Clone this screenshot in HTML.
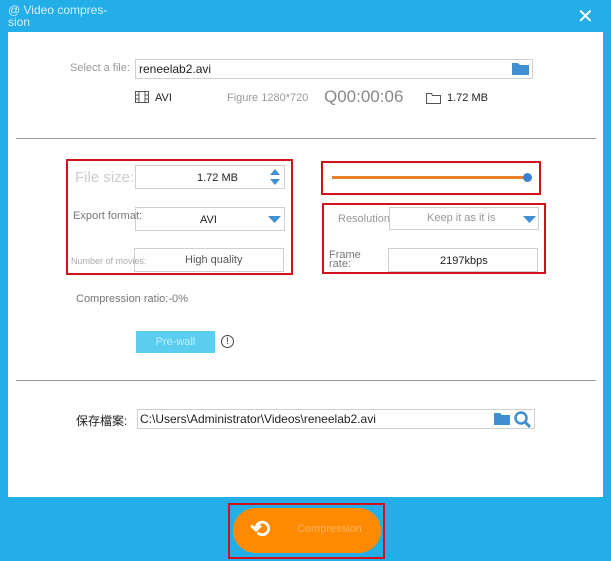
<!DOCTYPE html>
<html><head><meta charset="utf-8"><style>
*{margin:0;padding:0;box-sizing:border-box}
body{width:611px;height:561px;background:#24aee8;position:relative;overflow:hidden;font-family:"Liberation Sans","Noto Sans CJK SC",sans-serif;font-size:11px;color:#222}
.a{position:absolute;z-index:2}
.box{position:absolute;border:1px solid #cfcfcf;background:#fff;z-index:1}
.red{position:absolute;border:2px solid #d0121b;z-index:0}
.g{color:#999}
.hr{position:absolute;left:16px;width:580px;height:1px;background:#9a9a9a}
</style></head><body>
<div class="a" style="left:8px;top:4px;color:#d8efff;font-size:12px;line-height:12px">@ Video compres-<br>sion</div>
<div class="a" style="left:577px;top:4px;color:#fff;font-size:20px">✕</div>
<div class="a" style="left:8px;top:32px;width:595px;height:465px;background:#fff;z-index:0"></div>

<div class="a g" style="left:70px;top:62px">Select a file:</div>
<div class="box" style="left:135px;top:59px;width:398px;height:20px"></div>
<div class="a" style="left:139px;top:62px;font-size:12px">reneelab2.avi</div>
<svg class="a" style="left:511px;top:61px" width="19" height="15"><path d="M1 2h6l2 2h9v10H1z" fill="#3f8fd2"/></svg>
<svg class="a" style="left:135px;top:91px" width="14" height="12"><rect x="0.5" y="0.5" width="13" height="11" fill="none" stroke="#555"/><path d="M4 1v10M10 1v10M1 4h3M1 8h3M10 4h3M10 8h3" stroke="#555"/></svg>
<div class="a" style="left:155px;top:92px">AVI</div>
<div class="a g" style="left:227px;top:92px">Figure 1280*720</div>
<div class="a" style="left:324px;top:87px;font-size:17px;color:#888">Q00:00:06</div>
<svg class="a" style="left:426px;top:93px" width="15" height="11"><path d="M.5 .5h5l1 2h8v8H.5z" fill="none" stroke="#555"/></svg>
<div class="a" style="left:447px;top:92px">1.72 MB</div>
<div class="hr" style="top:138px"></div>

<div class="red" style="left:66px;top:159px;width:227px;height:116px"></div>
<div class="a" style="left:75px;top:169px;font-size:15px;color:#ccc">File size:</div>
<div class="box" style="left:135px;top:165px;width:150px;height:24px"></div>
<div class="a" style="left:197px;top:172px">1.72 MB</div>
<svg class="a" style="left:269px;top:167px" width="12" height="20"><path d="M1 8l5-6 5 6zM1 12l5 6 5-6z" fill="#3f8fd2"/></svg>
<div class="a" style="left:73px;top:210px;color:#777">Export format:</div>
<div class="box" style="left:135px;top:207px;width:150px;height:24px"></div>
<div class="a" style="left:200px;top:214px">AVI</div>
<svg class="a" style="left:268px;top:216px" width="13" height="7"><path d="M0 0h13l-6.5 7z" fill="#3f8fd2"/></svg>
<div class="box" style="left:134px;top:248px;width:150px;height:24px"></div>
<div class="a" style="left:71px;top:256px;font-size:9px;color:#aaa">Number of movies:</div>
<div class="a" style="left:185px;top:254px;color:#555">High quality</div>

<div class="red" style="left:321px;top:161px;width:220px;height:34px"></div>
<div class="a" style="left:332px;top:176px;width:195px;height:3px;background:#e8822a"></div>
<div class="a" style="left:523px;top:173px;width:9px;height:9px;border-radius:50%;background:#3f7fd6"></div>
<div class="red" style="left:322px;top:203px;width:224px;height:71px"></div>
<div class="box" style="left:389px;top:207px;width:150px;height:23px"></div>
<div class="a" style="left:338px;top:213px;color:#999">Resolution</div>
<div class="a" style="left:427px;top:212px;color:#999">Keep it as it is</div>
<svg class="a" style="left:523px;top:216px" width="13" height="7"><path d="M0 0h13l-6.5 7z" fill="#3f8fd2"/></svg>
<div class="a" style="left:329px;top:251px;color:#777;line-height:9px">Frame<br>rate:</div>
<div class="box" style="left:388px;top:248px;width:150px;height:24px"></div>
<div class="a" style="left:440px;top:255px">2197kbps</div>

<div class="a" style="left:76px;top:293px;color:#777">Compression ratio:-0%</div>
<div class="a" style="left:136px;top:331px;width:79px;height:22px;background:#5bcdef;color:#bfeffd;text-align:center;line-height:22px">Pre-wall</div>
<div class="a" style="left:221px;top:335px;width:13px;height:13px;border:1px solid #444;border-radius:50%;font-size:9px;text-align:center;line-height:11px">!</div>
<div class="hr" style="top:380px"></div>

<div class="a" style="left:76px;top:412px;font-size:12px">保存檔案:</div>
<div class="box" style="left:137px;top:409px;width:398px;height:20px"></div>
<div class="a" style="left:140px;top:412px;font-size:12px">C:\Users\Administrator\Videos\reneelab2.avi</div>
<svg class="a" style="left:493px;top:410px" width="40" height="18"><path d="M1 3h6l2 2h8v10H1z" fill="#3f8fd2"/><circle cx="28" cy="8" r="5.5" fill="none" stroke="#3f8fd2" stroke-width="2.5"/><path d="M32 12l5 5" stroke="#3f8fd2" stroke-width="3"/></svg>

<div class="red" style="left:228px;top:503px;width:157px;height:56px"></div>
<div class="a" style="left:233px;top:508px;width:148px;height:45px;border-radius:23px;background:#ff8a00"></div>
<div class="a" style="left:250px;top:515px;color:#fff;font-size:24px;font-weight:bold">⟲</div>
<div class="a" style="left:297px;top:523px;color:#ffb266">Compression</div>
</body></html>
